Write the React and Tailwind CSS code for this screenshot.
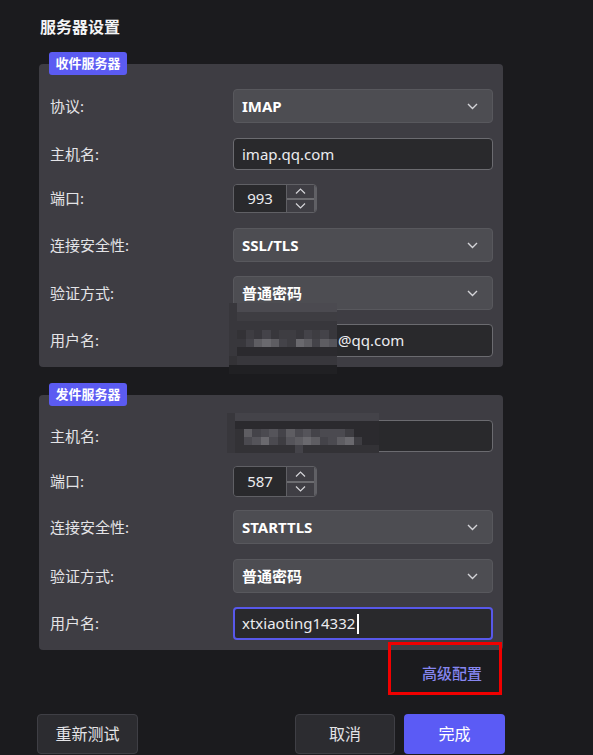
import React from "react";

const PAL = {
  a: "bg-[#202023]",
  b: "bg-[#2b2a2e]",
  c: "bg-[#333236]",
  d: "bg-[#38373c]",
  e: "bg-[#3e3d42]",
  f: "bg-[#444349]",
  g: "bg-[#4b4a50]",
  h: "bg-[#55545a]",
  i: "bg-[#5e5d62]",
  j: "bg-[#6a696e]",
};

const MOSAIC1 = [
  "dgggggggggggg",
  "deeeeeeeeeeee",
  "ddddddddddddd",
  "dcedfdeedfefd",
  "ddfijifejifih",
  "dbbbbbbbbbbbb",
  "cdddddddddddd",
  "aaaaaaaaaaaaa",
];

const MOSAIC2 = [
  "dfffffffffffffffff",
  "dbbbbbbbbbbbbbbbbb",
  "dcifghfighfgggebbb",
  "dcghjgehijifgijebb",
  "dcccccccfccccccccc",
];

function Mosaic({ rows, className }) {
  return (
    <div className={className}>
      {rows.map((r, ri) => (
        <div key={ri} className="flex flex-1">
          {r.split("").map((ch, ci) => (
            <div key={ci} className={"flex-1 " + PAL[ch]} />
          ))}
        </div>
      ))}
    </div>
  );
}

function Chevron() {
  return (
    <svg width="11" height="7" viewBox="0 0 11 7" fill="none">
      <polyline points="1,1 5.5,5.5 10,1" stroke="#d4d4d8" strokeWidth="1.4" />
    </svg>
  );
}

function Label({ children }) {
  return <div className="w-[183px] shrink-0 text-[15px] text-[#e4e4e7]">{children}</div>;
}

function Row({ label, children, className = "" }) {
  return (
    <div className={"flex items-center " + className}>
      <Label>{label}</Label>
      {children}
    </div>
  );
}

function Select({ value }) {
  return (
    <div className="flex h-[34px] w-[260px] items-center justify-between rounded-[4px] border border-[#58585d] bg-[#4d4d52] pl-[8px] pr-[14px] text-[15px] font-bold text-white">
      <span>{value}</span>
      <Chevron />
    </div>
  );
}

function Input({ value, focused }) {
  if (focused) {
    return (
      <div className="flex h-[33px] w-[260px] items-center rounded-[4px] border-2 border-[#5858ea] bg-[#29292c] pl-[7px] text-[15px] text-[#ececef]">
        <span>{value}</span>
        <span className="ml-[2px] h-[20px] w-[2px] bg-white" />
      </div>
    );
  }
  return (
    <div className="flex h-[32px] w-[260px] items-center rounded-[4px] border border-[#6b6b70] bg-[#29292c] pl-[8px] text-[15px] text-[#ececef]">
      {value}
    </div>
  );
}

function Spin({ value, h }) {
  return (
    <div className={"flex w-[84px] overflow-hidden rounded-[4px] border border-[#606065] " + h}>
      <div className="flex w-[52px] items-center justify-center bg-[#29292c] text-[15px] text-[#ececef]">
        {value}
      </div>
      <div className="flex w-[30px] flex-col border-l border-r-2 border-[#606065] bg-[#3f3e44]">
        <div className="flex flex-1 items-center justify-center">
          <svg width="11" height="6" viewBox="0 0 11 6" fill="none">
            <polyline points="1,5.5 5.5,1 10,5.5" stroke="#d4d4d8" strokeWidth="1.2" />
          </svg>
        </div>
        <div className="h-[2px] bg-[#6c6c70]" />
        <div className="flex flex-1 items-center justify-center">
          <svg width="11" height="6" viewBox="0 0 11 6" fill="none">
            <polyline points="1,0.5 5.5,5 10,0.5" stroke="#d4d4d8" strokeWidth="1.2" />
          </svg>
        </div>
      </div>
    </div>
  );
}

function Badge({ children }) {
  return (
    <div className="relative z-10 ml-[12px] flex h-[23px] w-[78px] items-center justify-center rounded-[3px] bg-[#5b5bf2] text-[13px] font-bold text-white">
      {children}
    </div>
  );
}

export default function App() {
  return (
    <div className="relative h-[755px] w-[593px] overflow-hidden bg-[#1b1b1e] font-['Noto_Sans','Noto_Sans_CJK_SC',sans-serif]">
      <div className="ml-[37px] flex w-[468px] flex-col">
        <div className="pl-[3px] pt-[15px] text-[16px] font-bold leading-[24px] text-[#f4f4f5]">服务器设置</div>

        <div className="mt-[13px]">
          <Badge>收件服务器</Badge>
          <div className="mx-[2px] -mt-[11px] rounded-[4px] bg-[#3e3d43] pb-[10px] pl-[11px] pr-[10px] pt-[25px]">
            <Row label="协议:">
              <Select value="IMAP" />
            </Row>
            <Row label="主机名:" className="mt-[15px]">
              <Input value="imap.qq.com" />
            </Row>
            <Row label="端口:" className="mt-[14px]">
              <Spin value="993" h="h-[29px]" />
            </Row>
            <Row label="连接安全性:" className="mt-[15px]">
              <Select value="SSL/TLS" />
            </Row>
            <Row label="验证方式:" className="mt-[14px]">
              <Select value="普通密码" />
            </Row>
            <Row label="用户名:" className="mt-[14px]">
              <div className="flex h-[33px] w-[260px] items-center rounded-[4px] border border-[#6b6b70] bg-[#29292c] pl-[8px] text-[15px] text-[#ececef]">
                <span className="ml-[96px]">@qq.com</span>
              </div>
            </Row>
          </div>
        </div>

        <div className="mt-[16px]">
          <Badge>发件服务器</Badge>
          <div className="mx-[2px] -mt-[11px] rounded-[4px] bg-[#3e3d43] pb-[10px] pl-[11px] pr-[10px] pt-[25px]">
            <Row label="主机名:">
              <Input value="" />
            </Row>
            <Row label="端口:" className="mt-[14px]">
              <Spin value="587" h="h-[31px]" />
            </Row>
            <Row label="连接安全性:" className="mt-[13px]">
              <Select value="STARTTLS" />
            </Row>
            <Row label="验证方式:" className="mt-[15px]">
              <Select value="普通密码" />
            </Row>
            <Row label="用户名:" className="mt-[14px]">
              <Input value="xtxiaoting14332" focused />
            </Row>
          </div>
        </div>

        <div className="relative z-10 -mt-[8px] flex justify-end pr-[3px]">
          <div className="flex h-[53px] w-[114px] justify-end border-[3px] border-[#f00000] pr-[17px] pt-[18px] text-[15px] font-medium leading-[20px] text-[#8686f0]">
            高级配置
          </div>
        </div>

        <div className="mt-[19px] flex items-center">
          <button className="flex h-[40px] w-[101px] items-center justify-center rounded-[4px] border border-[#3f3f45] bg-[#2c2c30] text-[16px] text-[#e4e4e7]">
            重新测试
          </button>
          <div className="flex-1" />
          <button className="flex h-[40px] w-[100px] items-center justify-center rounded-[4px] border border-[#3f3f45] bg-[#2c2c30] text-[16px] text-[#e4e4e7]">
            取消
          </button>
          <button className="ml-[9px] flex h-[40px] w-[101px] items-center justify-center rounded-[4px] bg-[#5b5bf5] text-[16px] text-white">
            完成
          </button>
        </div>
      </div>

      <Mosaic rows={MOSAIC1} className="absolute left-[229px] top-[303px] flex h-[71px] w-[108px] flex-col" />
      <Mosaic rows={MOSAIC2} className="absolute left-[227px] top-[413px] flex h-[40px] w-[152px] flex-col" />
    </div>
  );
}
